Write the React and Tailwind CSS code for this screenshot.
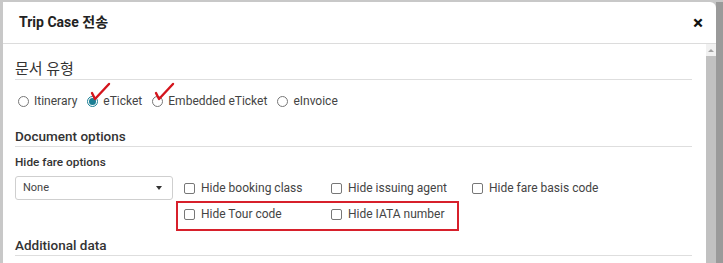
import { useState } from "react";

const Radio = ({ label, checked }) => (
    <label className="flex items-center gap-[5px] mr-[10px]">
        <span className={`w-[11px] h-[11px] rounded-full border flex items-center justify-center ${checked ? "border-[#1b7f95]" : "border-[#777]"}`}>
            {checked && <span className="w-[7px] h-[7px] rounded-full bg-[#1b7f95]" />}
        </span>
        <span>{label}</span>
    </label>
);

const Check = ({ label }) => (
    <label className="flex items-center gap-[6px] pl-[11px] h-[24px]">
        <span className="w-[11px] h-[11px] rounded-[2px] border border-[#777] bg-white" />
        <span>{label}</span>
    </label>
);

const Tick = ({ className }) => (
    <svg className={className} width="22" height="20" viewBox="0 0 22 20" fill="none">
        <path d="M3 11 L6 17 L20 2" stroke="#d4141c" strokeWidth="2.4" strokeLinecap="round" strokeLinejoin="round" />
    </svg>
);

export default function App() {
    const [fare] = useState("None");

    return (
        <div className="w-[723px] h-[263px] overflow-hidden bg-[#c8c8c8] pt-[2px] pl-[3px] flex" style={{ fontFamily: "Roboto, 'Noto Sans CJK KR', sans-serif" }}>
            <div className="w-[713px] h-full bg-white rounded-tr-[6px] flex flex-col text-[#333]">
                {/* header */}
                <div className="h-[42px] shrink-0 flex items-center justify-between pl-[16px] pr-[13px] border-b border-[#dcdcdc]">
                    <h1 className="text-[14px] font-bold text-[#222]">Trip Case 전송</h1>
                    <span className="text-[19px] font-bold text-[#111] leading-none">×</span>
                </div>
                {/* body */}
                <div className="flex flex-1 min-h-0">
                    <div className="flex-1 pl-[12px] pr-[14px] relative">
                        <h2 className="mt-[15px] h-[21px] text-[15px] leading-[20px] border-b border-[#dedede]">문서 유형</h2>
                        <div className="mt-[11px] h-[20px] flex items-center pl-[3px] text-[12px] text-[#444]">
                            <Radio label="Itinerary" />
                            <Radio label="eTicket" checked />
                            <Radio label="Embedded eTicket" />
                            <Radio label="eInvoice" />
                        </div>
                        <h2 className="mt-[15px] h-[21px] text-[13.5px] leading-[20px] font-medium text-[#333] border-b border-[#dedede]">Document options</h2>
                        <p className="mt-[7px] text-[11.8px] leading-[16px] font-medium text-[#333]">Hide fare options</p>
                        <div className="mt-[6px] grid grid-cols-[158px_147px_141px_auto] gap-y-[2px] text-[12px] text-[#444]">
                            <div className="h-[24px] border border-[#cfcfcf] rounded-[3px] flex items-center justify-between pl-[7px] pr-[10px] text-[11px] text-[#444]">
                                <span>{fare}</span>
                                <span className="w-0 h-0 border-l-[3.5px] border-r-[3.5px] border-t-[4px] border-l-transparent border-r-transparent border-t-[#333]" />
                            </div>
                            <Check label="Hide booking class" />
                            <Check label="Hide issuing agent" />
                            <Check label="Hide fare basis code" />
                            <div />
                            <Check label="Hide Tour code" />
                            <Check label="Hide IATA number" />
                        </div>
                        <h2 className="mt-[9px] h-[21px] text-[13.5px] leading-[20px] font-medium text-[#333] border-b border-[#dedede]">Additional data</h2>

                        {/* annotations */}
                        <Tick className="absolute left-[86px] top-[38px]" />
                        <Tick className="absolute left-[150px] top-[38px]" />
                        <div className="absolute left-[173px] top-[157px] w-[283px] h-[30px] border-2 border-[#d7202b]" />
                    </div>
                    {/* scrollbar */}
                    <div className="w-[10px] shrink-0 bg-[#f1f1f1] flex flex-col">
                        <div className="h-[12px] flex items-center justify-center">
                            <span className="w-0 h-0 border-l-[3px] border-r-[3px] border-b-[3px] border-l-transparent border-r-transparent border-b-[#a3a3a3]" />
                        </div>
                        <div className="flex-1 bg-[#c1c1c1]" />
                    </div>
                </div>
            </div>
            <div className="w-[7px] h-full bg-[#9a9a9a]" />
        </div>
    );
}
